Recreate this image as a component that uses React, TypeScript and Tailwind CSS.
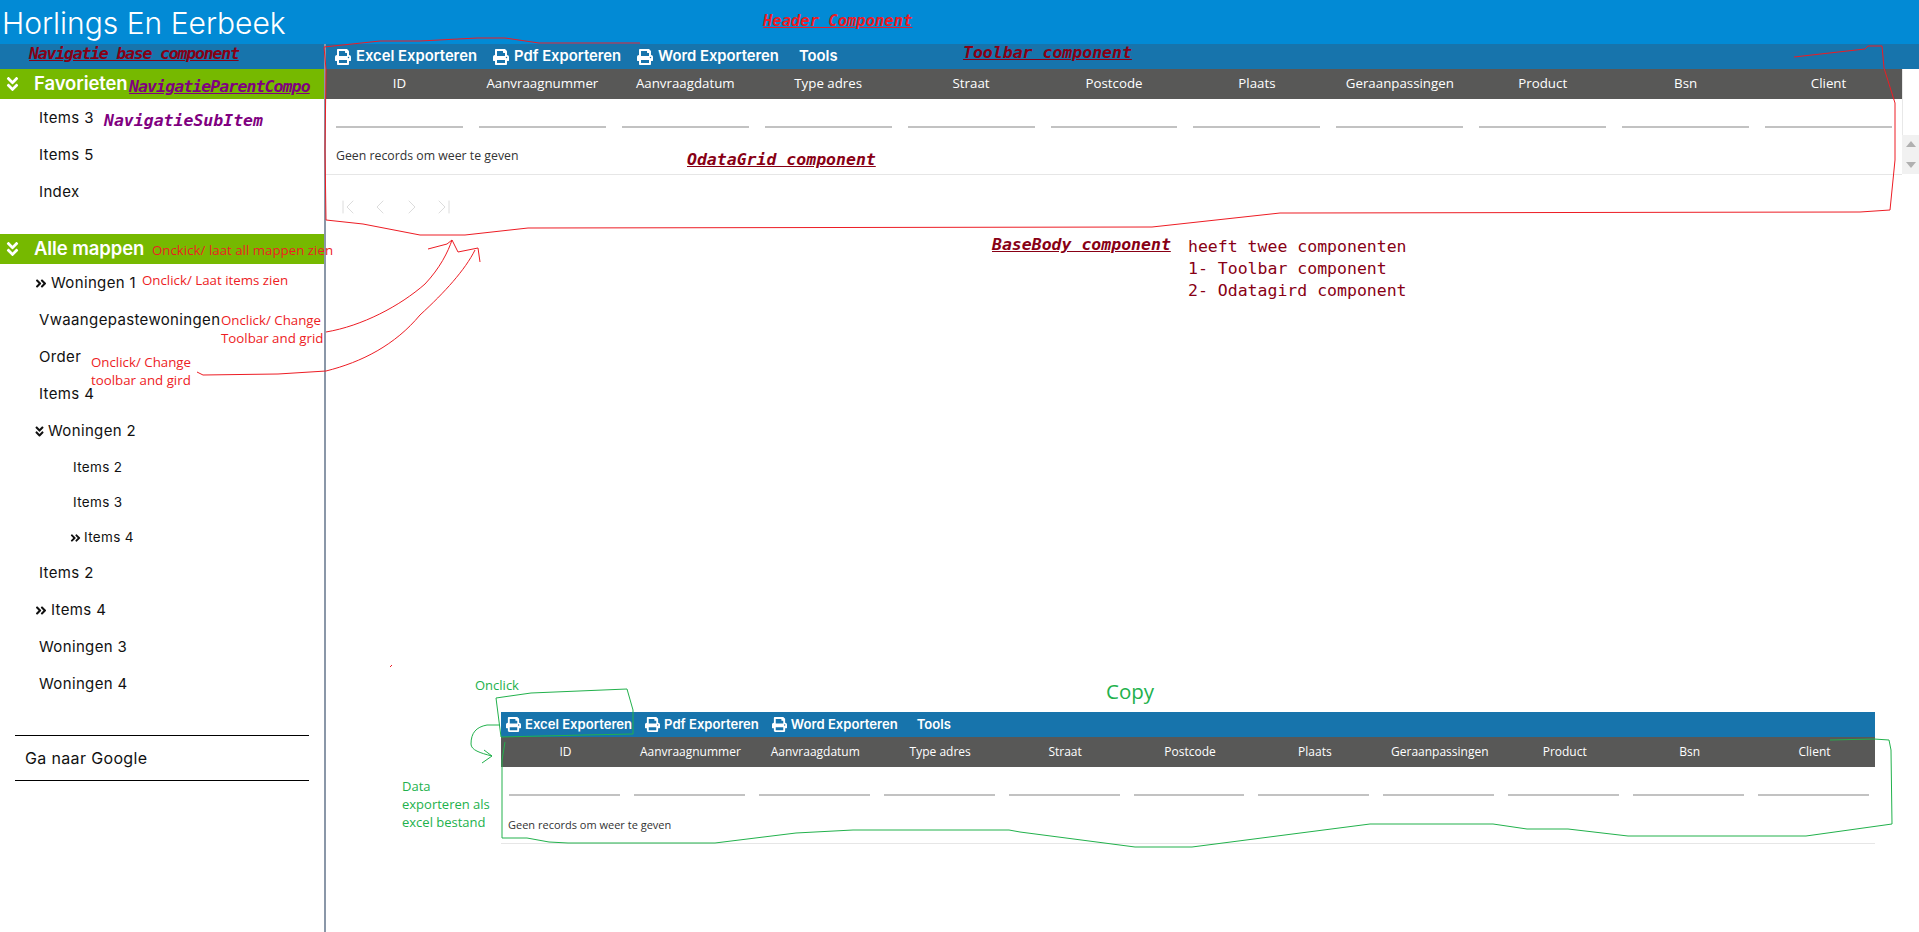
import { FaAngleDoubleDown, FaAngleDoubleRight, FaPrint } from "react-icons/fa";
import { ChevronFirst, ChevronLast, ChevronLeft, ChevronRight } from "lucide-react";

const columns = [
  "ID",
  "Aanvraagnummer",
  "Aanvraagdatum",
  "Type adres",
  "Straat",
  "Postcode",
  "Plaats",
  "Geraanpassingen",
  "Product",
  "Bsn",
  "Client",
];

const navFont = "font-['Inter',sans-serif] text-[#111] tracking-[0.35px]";
const noteRed = "absolute font-['Open_Sans',sans-serif] text-[13.3px] leading-[18px] text-[#ed1c24] whitespace-pre";
const noteGreen = "absolute font-['Open_Sans',sans-serif] text-[13px] leading-[18px] text-[#22b14c] whitespace-pre";
const noteMono = "absolute font-['DejaVu_Sans_Mono',monospace] text-[16.5px] leading-[22px] whitespace-pre";

function ToolbarItem({ label, large }: { label: string; large: boolean }) {
  return (
    <span className={large ? "flex items-center gap-[5px] mr-[16px]" : "flex items-center gap-[4px] mr-[13px]"}>
      <FaPrint className={large ? "w-[16px] h-[16px]" : "w-[15px] h-[15px]"} />
      {label}
    </span>
  );
}

function Toolbar({ large }: { large: boolean }) {
  return (
    <div
      className={
        large
          ? "flex items-center h-[25px] pl-[9px] text-[14.8px] font-semibold text-white font-['Inter',sans-serif]"
          : "flex items-center h-[25px] pl-[5px] text-[13.1px] font-semibold text-white bg-[#1774ac] font-['Inter',sans-serif]"
      }
    >
      <ToolbarItem label="Excel Exporteren" large={large} />
      <ToolbarItem label="Pdf Exporteren" large={large} />
      <ToolbarItem label="Word Exporteren" large={large} />
      <span className={large ? "ml-[4px]" : "ml-[6px]"}>Tools</span>
    </div>
  );
}

function Grid({ large }: { large: boolean }) {
  return (
    <div className="font-['Open_Sans',sans-serif]">
      <div className={large ? "grid grid-cols-11 h-[30px] items-center px-[2px] bg-[#585857] text-white" : "grid grid-cols-11 h-[30px] items-center bg-[#585857] text-white"}>
        {columns.map((c) => (
          <div key={c} className={large ? "text-center text-[13.3px]" : "text-center text-[12px] pl-[4px]"}>
            {c}
          </div>
        ))}
      </div>
      <div className={large ? "grid grid-cols-11 h-[29px] items-end px-[2px]" : "grid grid-cols-11 h-[29px] items-end"}>
        {columns.map((c) => (
          <div key={c} className={large ? "px-[8px]" : "pl-[8px] pr-[6px]"}>
            <div className="h-[2px] bg-[#c2c2c2]" />
          </div>
        ))}
      </div>
      <div className={large ? "pl-[10px] pt-[19px] h-[46px] text-[12.3px] leading-[18px] text-[#333]" : "pl-[7px] pt-[20px] h-[47px] text-[11px] leading-[18px] text-[#333]"}>
        Geen records om weer te geven
      </div>
      <div className="h-px bg-[#e6e6e6]" />
    </div>
  );
}

function NavRow({ label, indent, icon }: { label: string; indent: string; icon?: "right" | "down" }) {
  return (
    <div className={`flex items-center h-[37px] pt-[2px] text-[15px] ${navFont} ${indent}`}>
      {icon === "right" && <FaAngleDoubleRight className="w-[12px] h-[13px] mr-[4px]" />}
      {icon === "down" && <FaAngleDoubleDown className="w-[11px] h-[13px] mr-[3px]" />}
      {label}
    </div>
  );
}

function SubRow({ label, icon }: { label: string; icon?: boolean }) {
  return (
    <div className={icon ? `flex items-center h-[35px] pt-[2px] pl-[70px] text-[13.5px] ${navFont}` : `flex items-center h-[35px] pt-[2px] pl-[73px] text-[13.5px] ${navFont}`}>
      {icon && <FaAngleDoubleRight className="w-[11px] h-[12px] mr-[3px]" />}
      {label}
    </div>
  );
}

function GreenBar({ label }: { label: string }) {
  return (
    <div className="flex items-center h-[30px] bg-[#76b900] text-white font-['Inter',sans-serif] text-[18.5px] font-semibold tracking-[-0.1px]">
      <FaAngleDoubleDown className="w-[15px] h-[18px] ml-[5px] mr-[14px]" />
      {label}
    </div>
  );
}

function Sidebar() {
  return (
    <aside className="w-[326px] shrink-0 border-r-2 border-[#8a97a8] h-[888px]">
      <div className="h-[25px] bg-[#1774ac]" />
      <GreenBar label="Favorieten" />
      <NavRow label="Items 3" indent="pl-[39px]" />
      <NavRow label="Items 5" indent="pl-[39px]" />
      <NavRow label="Index" indent="pl-[39px]" />
      <div className="h-[24px]" />
      <GreenBar label="Alle mappen" />
      <NavRow label="Woningen 1" indent="pl-[35px]" icon="right" />
      <NavRow label="Vwaangepastewoningen" indent="pl-[39px]" />
      <NavRow label="Order" indent="pl-[39px]" />
      <NavRow label="Items 4" indent="pl-[39px]" />
      <NavRow label="Woningen 2" indent="pl-[34px]" icon="down" />
      <SubRow label="Items 2" />
      <SubRow label="Items 3" />
      <SubRow label="Items 4" icon />
      <NavRow label="Items 2" indent="pl-[39px]" />
      <NavRow label="Items 4" indent="pl-[35px]" icon="right" />
      <NavRow label="Woningen 3" indent="pl-[39px]" />
      <NavRow label="Woningen 4" indent="pl-[39px]" />
      <div className={`flex items-center h-[46px] mt-[33px] mx-[15px] pl-[10px] border-y border-black text-[16px] ${navFont}`}>
        Ga naar Google
      </div>
    </aside>
  );
}

function MainBody() {
  return (
    <main className="flex-1 min-w-0">
      <div className="bg-[#1774ac]">
        <Toolbar large />
      </div>
      <div className="flex">
        <div className="w-[1576px] shrink-0">
          <Grid large />
          <div className="flex items-center h-[63px] pl-[10px] gap-[8px] text-[#dcdcdc]">
            <ChevronFirst className="w-[24px] h-[24px]" strokeWidth={1} />
            <ChevronLeft className="w-[24px] h-[24px]" strokeWidth={1} />
            <ChevronRight className="w-[24px] h-[24px]" strokeWidth={1} />
            <ChevronLast className="w-[24px] h-[24px]" strokeWidth={1} />
          </div>
        </div>
        <div className="flex-1 flex flex-col">
          <div className="h-[66px] border-l border-[#e8e8e8]" />
          <div className="h-[39px] bg-[#f1f1f1] flex flex-col items-center justify-between py-[6px]">
            <div className="w-0 h-0 border-x-[5px] border-x-transparent border-b-[6px] border-b-[#b0b0b0]" />
            <div className="w-0 h-0 border-x-[5px] border-x-transparent border-t-[6px] border-t-[#b0b0b0]" />
          </div>
        </div>
      </div>
      <div className="ml-[175px] mt-[474px] w-[1374px]">
        <Toolbar large={false} />
        <Grid large={false} />
      </div>
    </main>
  );
}

function Annotations() {
  return (
    <>
      <span className="absolute left-[763px] top-[11px] font-['DejaVu_Sans_Mono',monospace] text-[#ed1c24] text-[15.5px] leading-[20px] font-bold italic underline whitespace-pre">Header Component</span>
      <span className={`${noteMono} left-[29px] top-[43px] text-[#880015] font-bold italic underline tracking-[-1.2px]`}>Navigatie base component</span>
      <span className={`${noteMono} left-[129px] top-[76px] text-[#800080] font-bold italic underline tracking-[-0.9px]`}>NavigatieParentCompo</span>
      <span className={`${noteMono} left-[104px] top-[110px] text-[#800080] font-bold italic`}>NavigatieSubItem</span>
      <span className={`${noteMono} left-[963px] top-[42px] text-[#880015] font-bold italic underline`}>Toolbar component</span>
      <span className={`${noteMono} left-[687px] top-[149px] text-[#880015] font-bold italic underline`}>OdataGrid component</span>
      <span className={`${noteMono} left-[992px] top-[234px] text-[#880015] font-bold italic underline`}>BaseBody component</span>
      <div className={`${noteMono} left-[1188px] top-[236px] text-[#880015]`}>
        {"heeft twee componenten\n1- Toolbar component\n2- Odatagird component"}
      </div>

      <span className={`${noteRed} left-[152px] top-[241px]`}>Onckick/ laat all mappen zien</span>
      <span className={`${noteRed} left-[142px] top-[271px]`}>Onclick/ Laat items zien</span>
      <div className={`${noteRed} left-[221px] top-[311px]`}>{"Onclick/ Change\nToolbar and grid"}</div>
      <div className={`${noteRed} left-[91px] top-[353px]`}>{"Onclick/ Change\ntoolbar and gird"}</div>

      <span className="absolute left-[1106px] top-[677px] font-['Open_Sans',sans-serif] text-[20.5px] leading-[28px] text-[#22b14c]">Copy</span>
      <span className={`${noteGreen} left-[475px] top-[676px]`}>Onclick</span>
      <div className={`${noteGreen} left-[402px] top-[777px]`}>{"Data\nexporteren als\nexcel bestand"}</div>

      <svg className="absolute inset-0 w-[1919px] h-[932px] pointer-events-none" viewBox="0 0 1919 932" fill="none">
        <g stroke="#ed1c24" strokeWidth="1">
          <path d="M640 43L539 43L505 38L477 38L420 41L380 41L324 47L326 69L325 150L326 220L363 224L420 235L465 235L528 228L1152 227L1280 213L1290 213L1860 212L1890 210L1895 160L1895 103L1884 68L1882 46L1868 46L1865 49L1794 57" />
          <path d="M326 332C362 326 400 306 425 284C440 268 448 252 452 240M428 249L447 244L452 240L458 252L478 248L480 262" />
          <path d="M197 372L203 375L278 374L326 371C362 362 395 345 420 315C445 292 465 270 475 250" />
          <path d="M390 667L392 665" />
        </g>
        <g stroke="#22b14c" strokeWidth="1">
          <path d="M501 737L496 698L531 693L627 689L633 710L633 734L584 735L501 737" />
          <path d="M500 725L487 725C476 727 471 733 471 744C471 750 480 753 492 756M484 750L492 756L482 763" />
          <path d="M505 742L502 760L502 838L527 838L549 842L568 843L715 843L796 833L853 830L1009 830L1020 832L1135 847L1192 847L1370 824L1493 824L1527 829L1568 829L1628 836L1806 836L1892 824L1891 750L1889 740L1874 739L1830 740" />
        </g>
      </svg>
    </>
  );
}

export default function App() {
  return (
    <div className="relative w-[1919px] h-[932px] overflow-hidden bg-white">
      <header className="flex items-center h-[44px] pt-[2px] bg-[#028ad5] pl-[2px] text-white font-['Inter',sans-serif] font-light text-[30px]">
        Horlings En Eerbeek
      </header>
      <div className="flex">
        <Sidebar />
        <MainBody />
      </div>
      <Annotations />
    </div>
  );
}
